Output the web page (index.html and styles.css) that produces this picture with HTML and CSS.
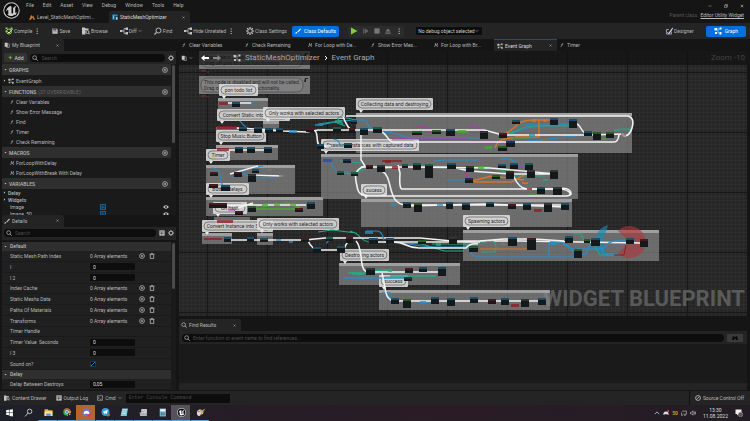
FILE: index.html
```html
<!DOCTYPE html>
<html lang="en">
<head>
  <meta charset="UTF-8">
  <meta name="viewport" content="width=device-width, initial-scale=1.0">
  <title>StaticMeshOptimizer</title>
  <link rel="stylesheet" href="styles.css">
</head>
<body>
  <!-- icon sprite -->
  <svg class="sprite" aria-hidden="true">
    <symbol id="i-gear" viewBox="0 0 16 16"><circle cx="8" cy="8" r="4.5" fill="none" stroke="currentColor" stroke-width="2"/><path d="M8 0v3M8 13v3M0 8h3M13 8h3M2.3 2.3l2.2 2.2M11.5 11.5l2.2 2.2M2.3 13.7l2.2-2.2M11.5 4.5l2.2-2.2" stroke="currentColor" stroke-width="2.4"/></symbol>
    <symbol id="i-search" viewBox="0 0 16 16"><circle cx="7" cy="7" r="5" fill="none" stroke="currentColor" stroke-width="1.8"/><path d="M11 11l4 4" stroke="currentColor" stroke-width="2.2"/></symbol>
    <symbol id="i-plus" viewBox="0 0 16 16"><circle cx="8" cy="8" r="6.5" fill="none" stroke="currentColor" stroke-width="1.8"/><path d="M8 4.5v7M4.5 8h7" stroke="currentColor" stroke-width="1.8"/></symbol>
    <symbol id="i-trash" viewBox="0 0 16 16"><path d="M1.500 3.500h13M6 3V1h4v2M3.500 4v11h9V4" fill="none" stroke="currentColor" stroke-width="2"/></symbol>
    <symbol id="i-graph" viewBox="0 0 16 16"><path d="M1 2h5v5H1zM11 1h4v4h-4zM2 10h4v4H2zM11 10h4v5h-4z" fill="currentColor"/><path d="M6 4h5M8 4v8h3" fill="none" stroke="currentColor"/></symbol>
    <symbol id="i-func" viewBox="0 0 16 16"><path d="M13 2c-3-1-4 0-5 4l-1 5c-.6 3-2 4-5 3M4 7h8" fill="none" stroke="currentColor" stroke-width="2"/></symbol>
    <symbol id="i-macro" viewBox="0 0 16 16"><path d="M1 14h3L6 2l3 9 5-9-2 12h3M4 2h3" fill="none" stroke="currentColor" stroke-width="2"/></symbol>
    <symbol id="i-down" viewBox="0 0 16 16"><path d="M3 5l5 5 5-5" fill="none" stroke="currentColor" stroke-width="2"/></symbol>
    <symbol id="i-tri" viewBox="0 0 16 16"><path d="M2 5h12l-6 7z" fill="currentColor"/></symbol>
    <symbol id="i-right" viewBox="0 0 16 16"><path d="M5 2v12l7-6z" fill="currentColor"/></symbol>
    <symbol id="i-dots" viewBox="0 0 16 16"><path d="M7 1h3v3H7zM7 7h3v3H7zM7 13h3v3H7z" fill="currentColor"/></symbol>
    <symbol id="i-close" viewBox="0 0 16 16"><path d="M3 3l10 10M13 3L3 13" stroke="currentColor" stroke-width="2.500"/></symbol>
    <symbol id="i-compile" viewBox="0 0 16 16"><path d="M1 1h4v3H1zM11 1h4v3h-4zM1 7h3v3H1z" fill="#8fd14a"/><circle cx="8" cy="9" r="5" fill="none" stroke="#9bd65a" stroke-width="2"/><path d="M5 9l3 3 7-8" fill="none" stroke="#dff5c4" stroke-width="2"/></symbol>
    <symbol id="i-save" viewBox="0 0 16 16"><path d="M1 1h11l3 3v11H1z" fill="currentColor"/><path d="M4 1h7v5H4zM4 10h8" fill="#555" stroke="#333"/></symbol>
    <symbol id="i-folder" viewBox="0 0 16 16"><path d="M0 1h6l1 2h6v3H7v9H0z" fill="currentColor"/><circle cx="11" cy="10" r="3" fill="none" stroke="currentColor" stroke-width="1.800"/><path d="M13 12l3 3" stroke="currentColor" stroke-width="2"/></symbol>
    <symbol id="i-diff" viewBox="0 0 16 16"><path d="M0 6h5v4H0zM11 1h5v5h-5zM11 10h5v5h-5z" fill="currentColor"/><path d="M5 8h3V3h3M8 8v5h3" fill="none" stroke="currentColor" stroke-width="1.500"/></symbol>
    <symbol id="i-pen" viewBox="0 0 16 16"><path d="M1 15c0-3 2-5 4-4s0 4-4 4zM6 10L14 1l2 2-8 9z" fill="currentColor"/></symbol>
    <symbol id="i-design" viewBox="0 0 16 16"><path d="M2 4h6v2H4v7h8V9h2v6H2z" fill="#8b9097"/><path d="M1 7l6 5 8-11 1 2-8 12z" fill="#cfe0ff"/></symbol>
    <symbol id="i-book" viewBox="0 0 16 16"><path d="M2 2h8v11H2z" fill="currentColor"/><path d="M11 5h3v10H6" fill="none" stroke="currentColor" stroke-width="1.500"/></symbol>
    <symbol id="i-arrow" viewBox="0 0 16 16"><path d="M0 8l7-6v4h9v4H7v4z" fill="currentColor"/></symbol>
    <symbol id="i-find" viewBox="0 0 16 16"><path d="M2 3h4v2h4V3h4l2 10h-6V9H6v4H0z" fill="currentColor"/></symbol>
    <symbol id="i-eye" viewBox="0 0 16 16"><path d="M0 8q8-9 16 0-8 9-16 0z" fill="currentColor"/><circle cx="8" cy="8" r="2.500" fill="#1a1a1a"/></symbol>
    <symbol id="i-image" viewBox="0 0 16 16"><path d="M1 1h14v14H1z" fill="#0d3550" stroke="#1f7fc0" stroke-width="2"/><path d="M4 12l3-6 3 4 2-2" stroke="#3aa0e0" fill="none"/></symbol>
    <symbol id="i-list" viewBox="0 0 16 16"><path d="M1 1h14v14H1z" fill="currentColor"/><path d="M3 5h10M3 9h10M7 5v9" stroke="#333" stroke-width="1.500"/></symbol>
    <symbol id="i-unreal" viewBox="0 0 32 32"><circle cx="16" cy="16" r="14.500" fill="#080808" stroke="currentColor" stroke-width="2"/><path d="M15 7c-6 2-9 6-9 11 1-2 2-3 3-3s1 1 1 2v5c0 1-1 1-2 1 4 4 8 4 11 3l2-2 2 1c2-2 3-4 3-6-1 1-2 2-3 1V11c1-2 2-3 3-4-3 0-5 2-6 4l-2-1c1 1 1 1 1 2v9c-1 1-3 1-3-1V10c0-1 0-2-1-3z" fill="currentColor"/></symbol>
  </svg>

  <header class="titlebar">
    <svg class="logo"><use href="#i-unreal"/></svg>
    <div class="titles">
      <nav class="menu">
        <a href="#">File</a><a href="#">Edit</a><a href="#">Asset</a><a href="#">View</a><a href="#">Debug</a><a href="#">Window</a><a href="#">Tools</a><a href="#">Help</a>
      </nav>
      <div class="asset-tabs">
        <button class="asset-tab"><svg class="icon" viewBox="0 0 16 16"><path d="M0 15L6 2l3 5 2-3 5 11h-4l-3-6-4 6z" fill="#d97a1c"/></svg>Level_StaticMeshOptimi...</button>
        <button class="asset-tab active"><svg class="icon" viewBox="0 0 16 16"><path d="M1 1h14v5H7v9H1z" fill="#1a8fc8"/><path d="M10 8h5v7h-5zM3 3h2v10H3z" fill="#7fd3ff"/></svg>StaticMeshOptimizer<svg class="icon tiny push"><use href="#i-close"/></svg></button>
      </div>
    </div>
    <div class="window-side">
      <div class="window-buttons">
        <button aria-label="Minimize"><svg class="icon small" viewBox="0 0 16 16"><path d="M2 8h12" stroke="#bbb" stroke-width="2"/></svg></button>
        <button aria-label="Restore"><svg class="icon small" viewBox="0 0 16 16"><path d="M2 5h9v9H2zM5 5V2h9v9h-3" fill="none" stroke="#bbb" stroke-width="2"/></svg></button>
        <button aria-label="Close"><svg class="icon small"><use href="#i-close"/></svg></button>
      </div>
      <p class="parent">Parent class: <a href="#">Editor Utility Widget</a></p>
    </div>
  </header>

  <div class="toolbar">
    <div class="tools">
      <button><svg class="icon big"><use href="#i-compile"/></svg>Compile</button>
      <button class="more" aria-label="Compile options"><svg class="icon"><use href="#i-dots"/></svg></button>
      <button><svg class="icon"><use href="#i-save"/></svg>Save</button>
      <button><svg class="icon big"><use href="#i-folder"/></svg>Browse</button>
      <button><svg class="icon big"><use href="#i-diff"/></svg>Diff<svg class="icon small"><use href="#i-down"/></svg></button>
      <button><svg class="icon big flip"><use href="#i-search"/></svg>Find</button>
      <button><svg class="icon big"><use href="#i-diff"/></svg>Hide Unrelated</button>
      <button class="more" aria-label="Hide options"><svg class="icon"><use href="#i-dots"/></svg></button>
      <button><svg class="icon big"><use href="#i-gear"/></svg>Class Settings</button>
    </div>
    <button class="primary"><svg class="icon"><use href="#i-pen"/></svg>Class Defaults</button>
    <div class="play-group">
      <button aria-label="Play"><svg class="icon big" viewBox="0 0 16 16"><path d="M2 1l13 7-13 7z" fill="#7ed038"/></svg></button>
      <button aria-label="Step"><svg class="icon" viewBox="0 0 16 16"><path d="M2 1v14M6 3l7 5-7 5z" stroke="#777" stroke-width="2" fill="#555"/></svg></button>
      <button aria-label="Stop"><svg class="icon" viewBox="0 0 16 16"><path d="M1 1h14v14H1z" fill="#777"/></svg></button>
      <button aria-label="Eject"><svg class="icon" viewBox="0 0 16 16"><path d="M8 1l7 8H1zM1 12h14v3H1z" fill="#777"/></svg></button>
      <button aria-label="Play options"><svg class="icon"><use href="#i-dots"/></svg></button>
    </div>
    <div class="debug">
      <select aria-label="Debug object"><option>No debug object selected</option></select>
      <svg class="icon small"><use href="#i-down"/></svg>
    </div>
    <div class="modes">
      <button><svg class="icon big"><use href="#i-design"/></svg>Designer</button>
      <button class="primary"><svg class="icon big"><use href="#i-graph"/></svg>Graph</button>
    </div>
  </div>

  <main>
    <aside>
      <section class="blueprint">
        <div class="panel-tab"><svg class="icon"><use href="#i-book"/></svg>My Blueprint<svg class="icon tiny push"><use href="#i-close"/></svg></div>
        <div class="search-row">
          <button class="add"><span>+</span>Add</button>
          <label class="search"><svg class="icon"><use href="#i-search"/></svg><input type="text" placeholder="Search" aria-label="Search blueprint"></label>
          <svg class="icon"><use href="#i-gear"/></svg>
        </div>
        <div class="scroll tall">
          <h2><svg class="icon tiny"><use href="#i-tri"/></svg>GRAPHS<svg class="icon push"><use href="#i-plus"/></svg></h2>
          <ul class="single">
            <li class="root"><svg class="icon tiny"><use href="#i-right"/></svg><svg class="icon"><use href="#i-graph"/></svg>EventGraph</li>
          </ul>
          <h2><svg class="icon tiny"><use href="#i-tri"/></svg>FUNCTIONS <small>(37 OVERRIDABLE)</small><svg class="icon push"><use href="#i-plus"/></svg></h2>
          <ul>
            <li><svg class="icon small"><use href="#i-func"/></svg>Clear Variables</li>
            <li><svg class="icon small"><use href="#i-func"/></svg>Show Error Message</li>
            <li><svg class="icon small"><use href="#i-func"/></svg>Find</li>
            <li><svg class="icon small"><use href="#i-func"/></svg>Timer</li>
            <li><svg class="icon small"><use href="#i-func"/></svg>Check Remaining</li>
          </ul>
          <h2><svg class="icon tiny"><use href="#i-tri"/></svg>MACROS<svg class="icon push"><use href="#i-plus"/></svg></h2>
          <ul>
            <li><svg class="icon small"><use href="#i-macro"/></svg>ForLoopWithDelay</li>
            <li><svg class="icon small"><use href="#i-macro"/></svg>ForLoopWithBreak With Delay</li>
          </ul>
          <h2><svg class="icon tiny"><use href="#i-tri"/></svg>VARIABLES<svg class="icon push"><use href="#i-plus"/></svg></h2>
          <ul class="vars">
            <li class="group"><svg class="icon tiny"><use href="#i-right"/></svg>Delay</li>
            <li class="group"><svg class="icon tiny"><use href="#i-right"/></svg>Widgets</li>
            <li class="var"><span>Image</span><svg class="icon"><use href="#i-image"/></svg><svg class="icon"><use href="#i-eye"/></svg></li>
            <li class="var"><span>Image_50</span><svg class="icon"><use href="#i-image"/></svg><svg class="icon"><use href="#i-eye"/></svg></li>
          </ul>
        </div>
      </section>

      <section class="details">
        <div class="panel-tab"><svg class="icon"><use href="#i-pen"/></svg>Details<svg class="icon tiny push"><use href="#i-close"/></svg></div>
        <div class="search-row">
          <label class="search"><svg class="icon"><use href="#i-search"/></svg><input type="text" placeholder="Search" aria-label="Search details"></label>
          <svg class="icon"><use href="#i-list"/></svg>
          <svg class="icon"><use href="#i-gear"/></svg>
        </div>
        <div class="scroll props">
          <h3><svg class="icon tiny"><use href="#i-tri"/></svg>Default</h3>
          <div class="prop"><span>Static Mesh Path Index</span><span class="value">0 Array elements</span><svg class="icon"><use href="#i-plus"/></svg><svg class="icon"><use href="#i-trash"/></svg></div>
          <div class="prop"><label for="i1">I</label><input id="i1" type="text" value="0"></div>
          <div class="prop"><label for="i2">I 2</label><input id="i2" type="text" value="0"></div>
          <div class="prop"><span>Index Cache</span><span class="value">0 Array elements</span><svg class="icon"><use href="#i-plus"/></svg><svg class="icon"><use href="#i-trash"/></svg></div>
          <div class="prop"><span>Static Meshs Data</span><span class="value">0 Array elements</span><svg class="icon"><use href="#i-plus"/></svg><svg class="icon"><use href="#i-trash"/></svg></div>
          <div class="prop"><span>Paths Of Materials</span><span class="value">0 Array elements</span><svg class="icon"><use href="#i-plus"/></svg><svg class="icon"><use href="#i-trash"/></svg></div>
          <div class="prop"><span>Transforms</span><span class="value">0 Array elements</span><svg class="icon"><use href="#i-plus"/></svg><svg class="icon"><use href="#i-trash"/></svg></div>
          <div class="prop"><span>Timer Handle</span></div>
          <div class="prop"><label for="tv">Timer Value &nbsp;Seconds</label><input id="tv" type="text" value="0"></div>
          <div class="prop"><label for="i3">I 3</label><input id="i3" type="text" value="0"></div>
          <div class="prop"><label for="sound">Sound on?</label><input id="sound" type="checkbox" checked></div>
          <h3><svg class="icon tiny"><use href="#i-tri"/></svg>Delay</h3>
          <div class="prop"><label for="dbd">Delay Between Destroys</label><input id="dbd" type="text" value="0,05"></div>
        </div>
      </section>
    </aside>

    <section class="work">
      <div class="doc-tabs">
        <button><svg class="icon small"><use href="#i-func"/></svg>Clear Variables</button>
        <button><svg class="icon small"><use href="#i-func"/></svg>Check Remaining</button>
        <button><svg class="icon small"><use href="#i-macro"/></svg>For Loop with De...</button>
        <button><svg class="icon small"><use href="#i-func"/></svg>Show Error Mes...</button>
        <button><svg class="icon small"><use href="#i-macro"/></svg>For Loop with Br...</button>
        <button class="active"><svg class="icon"><use href="#i-graph"/></svg>Event Graph<svg class="icon tiny push"><use href="#i-close"/></svg></button>
        <button><svg class="icon small"><use href="#i-func"/></svg>Timer</button>
      </div>

      <div class="canvas">
        <p class="watermark">WIDGET BLUEPRINT</p>
        <svg id="graph" viewBox="179 50 571 270" width="571" height="270"></svg>
        <div class="crumbs">
          <span class="bookmark"><svg class="icon"><use href="#i-book"/></svg><svg class="icon small"><use href="#i-down"/></svg></span>
          <svg class="icon big white"><use href="#i-arrow"/></svg>
          <svg class="icon big flip dim"><use href="#i-arrow"/></svg>
          <svg class="icon big gap"><use href="#i-graph"/></svg>
          <span>StaticMeshOptimizer</span>
          <svg class="icon small white" viewBox="0 0 16 16"><path d="M4 0l8 8-8 8" fill="none" stroke="currentColor" stroke-width="4"/></svg>
          <span>Event Graph</span>
          <span class="zoom">Zoom -10</span>
        </div>
      </div>

      <div class="find">
        <div class="panel-tab"><svg class="icon"><use href="#i-search"/></svg>Find Results<svg class="icon tiny push"><use href="#i-close"/></svg></div>
        <div class="find-row">
          <label class="search"><svg class="icon"><use href="#i-search"/></svg><input type="text" placeholder="Enter function or event name to find references..." aria-label="Find references"></label>
          <button aria-label="Find in all blueprints"><svg class="icon"><use href="#i-find"/></svg></button>
        </div>
        <div class="results"></div>
      </div>
    </section>
  </main>

  <footer class="status">
    <button><svg class="icon"><use href="#i-folder"/></svg>Content Drawer</button>
    <button><svg class="icon"><use href="#i-list"/></svg>Output Log</button>
    <button><svg class="icon" viewBox="0 0 16 16"><path d="M1 2h14v12H1zM3 5l3 3-3 3M8 11h4" fill="none" stroke="#ccc" stroke-width="1.500"/></svg>Cmd<svg class="icon small"><use href="#i-down"/></svg></button>
    <input type="text" placeholder="Enter Console Command" aria-label="Console command">
    <button class="source"><svg class="icon" viewBox="0 0 16 16"><circle cx="8" cy="8" r="6.500" fill="none" stroke="#ccc" stroke-width="2"/><path d="M4 12l8-8" stroke="#ccc" stroke-width="2"/></svg>Source Control Off</button>
  </footer>

  <div class="taskbar">
    <button aria-label="Start"><svg viewBox="0 0 16 16"><path d="M2 4l5-1v5H2zM8 3l6-1v6H8zM2 9h5v4l-5-1zM8 9h6v6l-6-1z" fill="#fff"/></svg></button>
    <button aria-label="Search"><svg class="flip" viewBox="0 0 16 16"><circle cx="6" cy="6" r="4" fill="none" stroke="#ddd" stroke-width="1.500"/><path d="M9 9l5 6" stroke="#ddd" stroke-width="1.500"/></svg></button>
    <button class="open" aria-label="Explorer"><svg viewBox="0 0 16 16"><path d="M1 2h6l1 2h7v10H1z" fill="#e9b53c"/><path d="M1 6h14v8H1z" fill="#ffe08a"/><path d="M4 10h8v4H4z" fill="#3a9be0"/></svg></button>
    <button class="open" aria-label="Chrome"><svg viewBox="0 0 16 16"><circle cx="7" cy="7" r="6.500" fill="#3aa757"/><path d="M1 4a7 7 0 0 1 12.500 1H7z" fill="#e8453c"/><path d="M13.500 5A7 7 0 0 1 7 14l3-6z" fill="#fbc116"/><circle cx="7" cy="7" r="2.800" fill="#4688f1" stroke="#fff"/><circle cx="12" cy="12" r="3.500" fill="#222"/><circle cx="12" cy="11" r="1.300" fill="#eee"/></svg></button>
    <button class="open alert" aria-label="Discord"><svg viewBox="0 0 16 16"><circle cx="8" cy="8" r="7" fill="#6b74dc"/><path d="M3 11c0-5 2-6 5-6s5 1 5 6l-3-1H6z" fill="#fff"/><circle cx="13" cy="13" r="3" fill="#e33a4a"/></svg></button>
    <button class="open" aria-label="Telegram"><svg viewBox="0 0 16 16"><circle cx="8" cy="7" r="7" fill="#2c9fdc"/><path d="M3 7l9-4-2 8-2-2-2 2-1-3z" fill="#fff"/><circle cx="13" cy="12" r="3" fill="#777"/></svg></button>
    <button class="open" aria-label="Notepad"><svg viewBox="0 0 16 16"><path d="M4 1h10l-2 13H1z" fill="#7fc6d6"/><path d="M4 3h9M3 7h8M3 10h7" stroke="#e8f8fb"/></svg></button>
    <button class="open" aria-label="Viewer"><svg viewBox="0 0 16 16"><path d="M4 2h10v8H4z" fill="#ddd"/><path d="M1 7l6 3 7-4v8H2z" fill="#aeb4ba"/><path d="M5 5l3 2 3-3" stroke="#555" fill="none"/></svg></button>
    <button class="open" aria-label="Calculator"><svg viewBox="0 0 16 16"><path d="M3 1h11v14H3z" fill="#7eb9cc"/><path d="M4 2h9v4H4z" fill="#e8f4f8"/><path d="M5 9h7M5 12h7" stroke="#31566b" stroke-width="2" stroke-dasharray="2 1"/></svg></button>
    <button class="open current" aria-label="Unreal Editor"><svg><use href="#i-unreal"/></svg></button>
    <button class="open" aria-label="Paint"><svg viewBox="0 0 16 16"><path d="M2 6c2-5 11-4 11 1s-3 4-4 4-1 4-4 3-4-4-3-8z" fill="#d7dde2"/><circle cx="5" cy="6" r="1.500" fill="#e44"/><circle cx="9" cy="5" r="1.500" fill="#4a4"/><path d="M8 12L15 2" stroke="#d98e3a" stroke-width="2"/></svg></button>
    <div class="tray">
      <svg class="icon" viewBox="0 0 16 16"><path d="M2 11l6-6 6 6" fill="none" stroke="#ddd" stroke-width="2"/></svg>
      <svg class="icon" viewBox="0 0 16 16"><path d="M1 13c0-7 2-9 7-9s7 2 7 9l-4-2H5z" fill="#ddd"/><circle cx="14" cy="3" r="3" fill="#e33"/></svg>
      <span class="temp">50</span>
      <svg class="icon" viewBox="0 0 16 16"><path d="M3 3h12v8H6M1 6v8h4M8 14h5" fill="none" stroke="#ddd" stroke-width="1.500"/></svg>
      <svg class="icon" viewBox="0 0 16 16"><path d="M1 6h3l4-4v12l-4-4H1zM11 5q2 3 0 6M13 3q4 5 0 10" fill="none" stroke="#ddd" stroke-width="1.500"/></svg>
      <p class="clock">13:30<br>11.08.2022</p>
      <svg class="icon big" viewBox="0 0 16 16"><path d="M1 1h12v9H7l-3 3v-3H1z" fill="#eee"/><circle cx="11" cy="11" r="4.500" fill="#555" stroke="#aaa"/></svg>
    </div>
  </div>

  <script src="graph.js"></script>
</body>
</html>
```

FILE: styles.css
```css
:root{
  --bg:#151515;
  --panel:#1a1a1a;
  --bar:#242424;
  --head:#2f2f2f;
  --field:#0d0d0d;
  --text:#b8b8b8;
  --blue:#0070e0;
}
*{
  padding:0;
  margin:0;
  box-sizing:border-box;
}
body{
  display:flex;
  flex-direction:column;
  height:100vh;
  overflow:hidden;
  background:var(--bg);
  color:var(--text);
  font-family:Roboto,"Liberation Sans",sans-serif;
  font-size:5px;
  line-height:6px;
}
button,input,select{
  font:inherit;
  color:inherit;
  background:none;
  border:0;
  outline:none;
}
button{
  display:flex;
  align-items:center;
  gap:2px;
  white-space:nowrap;
}
a{
  color:inherit;
}
ul{
  list-style:none;
}
input::placeholder{
  color:#4c4c4c;
}
.sprite{
  display:none;
}
.icon{
  width:6px;
  height:6px;
  flex:none;
  color:#c4c4c4;
}
.icon.tiny{
  width:3px;
  height:3px;
}
.icon.small{
  width:4px;
  height:4px;
}
.icon.big{
  width:8px;
  height:8px;
}
.icon.white{
  color:#fff;
}
.icon.dim{
  color:#888;
}
.flip{
  transform:scaleX(-1);
}
.push{
  margin-left:auto;
}

/* title bar */
.titlebar{
  display:flex;
  height:23px;
  flex:none;
}
.logo{
  width:17px;
  height:17px;
  margin:2px 0 0 3px;
  color:#ccc;
}
.titles{
  display:flex;
  flex-direction:column;
  justify-content:space-between;
}
.menu{
  display:flex;
  gap:9px;
  padding:2px 0 0 6px;
}
.menu a{
  text-decoration:none;
}
.asset-tabs{
  display:flex;
}
.asset-tab{
  width:89px;
  height:12px;
  padding:0 9px;
}
.asset-tab.active{
  width:81px;
  padding:0 5px 0 3px;
  background:var(--bar);
  color:#ddd;
  border-radius:2px 2px 0 0;
}
.window-side{
  display:flex;
  flex-direction:column;
  align-items:flex-end;
  gap:4px;
  margin-left:auto;
  padding:4px 6px 0 0;
}
.window-buttons{
  display:flex;
  gap:12px;
}
.parent{
  color:#555;
}
.parent a{
  color:#bbb;
  margin-left:1px;
}

/* toolbar */
.toolbar{
  display:flex;
  align-items:center;
  height:16px;
  flex:none;
  padding:0 4px 0 5px;
  background:var(--bar);
}
.toolbar button{
  gap:1px;
}
.tools{
  display:flex;
  gap:12px;
}
.tools .more{
  margin-left:-10px;
}
.primary{
  height:11px;
  padding:0 3px;
  background:var(--blue);
  color:#fff;
  border-radius:2px;
}
.primary .icon{
  color:#fff;
}
.tools + .primary{
  margin-left:5px;
}
.toolbar .primary{
  gap:3px;
}
.play-group{
  display:flex;
  align-items:center;
  gap:5px;
  height:11px;
  margin-left:9px;
  padding:0 2px;
  background:#2c2c2c;
  border-radius:2px;
}
.debug{
  display:flex;
  align-items:center;
  height:8px;
  margin-left:12px;
  padding:0 3px 0 2px;
  background:var(--field);
  border-radius:1px;
}
.debug select{
  appearance:none;
  color:#ccc;
}
.modes{
  display:flex;
  align-items:center;
  gap:12px;
  margin-left:auto;
}
.modes .primary{
  padding:0 8px;
}

main{
  display:flex;
  flex:1;
  min-height:0;
}
aside{
  display:flex;
  flex-direction:column;
  width:177px;
  flex:none;
  padding:0 1px 0 2px;
}
.panel-tab{
  display:flex;
  align-items:center;
  gap:2px;
  width:62px;
  height:12px;
  flex:none;
  padding:0 5px 0 2px;
  background:var(--bar);
  border-radius:2px 2px 0 0;
}
.search-row{
  display:flex;
  align-items:center;
  gap:3px;
  height:13px;
  flex:none;
  padding:0 2px;
  background:var(--bar);
}
.add{
  height:9px;
  padding:0 4px;
  background:#333;
  border-radius:2px;
  color:#ddd;
}
.add span{
  color:#7ed038;
  font-size:8px;
}
.search{
  display:flex;
  align-items:center;
  flex:1;
  gap:3px;
  height:8px;
  padding:0 2px;
  background:var(--field);
  border-radius:4px;
}
.search input{
  flex:1;
  min-width:0;
}

/* scrolling lists, the thumb is drawn on the right edge */
.scroll{
  position:relative;
  flex:1;
  min-height:0;
  overflow:hidden;
  padding-right:5px;
  background:var(--panel);
}
.scroll::after{
  content:"";
  position:absolute;
  top:1px;
  right:1px;
  width:3px;
  height:46px;
  background:#4a4a4a;
  border-radius:2px;
}
.scroll.tall::after{
  height:78px;
}
.blueprint{
  display:flex;
  flex-direction:column;
  height:50%;
}
.blueprint h2{
  display:flex;
  align-items:center;
  gap:2px;
  height:11px;
  padding:0 3px 0 2px;
  background:var(--head);
  font-size:5px;
  font-weight:500;
}
.blueprint h2 small{
  color:#666;
  font-size:5px;
  font-weight:400;
}
.blueprint li{
  display:flex;
  align-items:center;
  gap:2px;
  height:10px;
  padding-left:8px;
}
.blueprint .root{
  height:11px;
  padding-left:1px;
}
.blueprint .vars li{
  height:7px;
}
.blueprint .vars .group{
  padding-left:1px;
  font-weight:500;
}
.blueprint .vars .var{
  display:grid;
  grid-template-columns:88px 1fr 6px;
  padding-right:2px;
}
.details{
  display:flex;
  flex-direction:column;
  flex:1;
  min-height:0;
}
.props{
  display:flex;
  flex-direction:column;
  margin-top:2px;
}
.props h3{
  display:flex;
  align-items:center;
  gap:3px;
  flex:1;
  padding-left:2px;
  background:var(--head);
  font-size:5px;
  font-weight:500;
}
.prop{
  display:grid;
  grid-template-columns:76px 45px 6px 6px;
  gap:4px;
  align-items:center;
  flex:1;
  padding-left:8px;
  background:#202020;
  border-bottom:1px solid #1a1a1a;
  white-space:nowrap;
}
.prop input[type=text]{
  height:7px;
  padding:0 3px;
  background:var(--field);
  border-radius:1px;
  color:#ddd;
}
.prop input[type=checkbox]{
  appearance:none;
  width:6px;
  height:6px;
  background:#0a0a0a;
  border:1px solid #333;
}
.prop input[type=checkbox]:checked{
  background:linear-gradient(135deg,#0a0a0a 40%,#2d8ee8 41% 59%,#0a0a0a 60%);
}

/* graph side */
.work{
  display:flex;
  flex-direction:column;
  flex:1;
  min-width:0;
  padding:0 3px 0 2px;
}
.doc-tabs{
  display:flex;
  height:12px;
  flex:none;
}
.doc-tabs button{
  width:63px;
  gap:3px;
  padding:0 5px 0 3px;
}
.doc-tabs .active{
  gap:2px;
  background:var(--bar);
  color:#ddd;
  border-top:1px solid #1b4f86;
}
.canvas{
  position:relative;
  flex:1;
  min-height:0;
  overflow:hidden;
  background-color:#262626;
  background-image:
    linear-gradient(#181818 1px,transparent 1px),
    linear-gradient(90deg,#181818 1px,transparent 1px),
    linear-gradient(#2d2d2d 1px,transparent 1px),
    linear-gradient(90deg,#2d2d2d 1px,transparent 1px);
  background-size:60px 60px,60px 60px,4px 4px,4px 4px;
  background-position:28px 21px;
}
.canvas > svg{
  position:relative;
  display:block;
}
.crumbs{
  position:absolute;
  top:0;
  left:0;
  right:0;
  display:flex;
  align-items:center;
  gap:4px;
  height:14px;
  padding-right:2px;
  background:rgba(14,14,14,0.65);
  color:#aaa;
  font-size:8px;
  line-height:10px;
}
.bookmark{
  display:flex;
  align-items:center;
  gap:2px;
  width:18px;
  padding-left:2px;
}
.crumbs .gap{
  margin-left:8px;
}
.zoom{
  margin-left:auto;
  color:#444;
}
.watermark{
  position:absolute;
  right:2px;
  bottom:4px;
  color:#5a5a5a;
  font-size:22px;
  font-weight:700;
  line-height:26px;
}
.bubble-text{
  font-size:5px;
  fill:#2a2a2a;
}
.find{
  padding-top:3px;
}
.find-row{
  display:flex;
  align-items:center;
  gap:3px;
  height:13px;
  padding:0 4px 0 3px;
  background:var(--bar);
}
.find-row button{
  justify-content:center;
  width:16px;
  height:8px;
  background:#3a3a3a;
}
.find-row button .icon{
  color:#080808;
}
.results{
  height:46px;
  background:var(--panel);
  border-bottom:7px solid var(--bar);
}

/* status bar */
.status{
  display:flex;
  align-items:center;
  gap:9px;
  height:14px;
  flex:none;
  margin-top:1px;
  padding:0 3px 0 4px;
  background:var(--bar);
}
.status > input{
  width:104px;
  height:9px;
  margin-left:-5px;
  padding:0 3px;
  background:var(--field);
  font-family:"Liberation Mono",monospace;
}
.source{
  height:100%;
  margin-left:auto;
  padding:0 3px 0 5px;
  border-left:1px solid #111;
}

/* windows taskbar */
.taskbar{
  display:flex;
  height:16px;
  flex:none;
  background:linear-gradient(90deg,#1e2029,#261d25 35%,#2a1c25 60%,#221d24);
}
.taskbar button{
  justify-content:center;
  width:19px;
  border-bottom:1px solid transparent;
}
.taskbar button svg{
  width:9px;
  height:9px;
  color:#fff;
}
.taskbar .open{
  border-bottom-color:#5fa4dc;
  border-left:1px solid transparent;
}
.taskbar .alert{
  background:#b5652c;
}
.taskbar .current{
  background:#55525a;
}
.tray{
  display:flex;
  align-items:center;
  gap:3px;
  margin-left:auto;
  padding-right:7px;
}
.temp{
  color:#c8992c;
  font-weight:700;
}
.clock{
  margin:0 4px;
  color:#ddd;
  text-align:center;
}
```

FILE: graph.js
```js
const NS = 'http://www.w3.org/2000/svg';
const graph = document.querySelector('#graph');

function add(tag, attrs, text) {
  const el = document.createElementNS(NS, tag);
  for (const key in attrs) el.setAttribute(key, attrs[key]);
  if (text) el.textContent = text;
  graph.appendChild(el);
  return el;
}

// comment boxes: x, y, width, height
const boxes = [
  [218, 97, 50, 11], [263, 120, 16, 11], [216, 126, 24, 4], [216, 144, 62, 15],
  [206, 164, 89, 29], [206, 196, 117, 19], [214, 216, 36, 6], [202, 232, 30, 11], [257, 232, 16, 12],
  [356, 112, 276, 40], [321, 153, 257, 45], [361, 198, 211, 28],
  [463, 229, 196, 31], [339, 262, 121, 22], [379, 289, 171, 20]
];

// comment bubbles: x, y, width, text
const bubbles = [
  [219, 83, 39, 'pon todo list'],
  [217, 108, 73, 'Convert Static into Instance'],
  [263, 106, 82, 'Only works with selected actors'],
  [356, 97, 77, 'Collecting data and destroying'],
  [216, 129, 50, 'Stop Music Button'],
  [206, 148, 24, 'Timer'],
  [206, 182, 43, 'Button delays'],
  [213, 201, 34, 'On hash'],
  [202, 219, 71, 'Convert Instance into Static'],
  [257, 217, 82, 'Only works with selected actors'],
  [321, 138, 98, 'Spawning instances with captured data'],
  [361, 183, 26, 'sucess'],
  [463, 214, 47, 'Spawning actors'],
  [340, 248, 49, 'Destroying actors'],
  [379, 274, 29, 'success']
];

const white = '#f2f2f2', blue = '#2b8cc4', teal = '#25a884', pink = '#c22bb8', orange = '#d4762a', green = '#48a82c', red = '#8c1c22';

// wires: colour, path, width
const wires = [
  // collecting data
  [blue, 'M240 120q6 8 12 8M318 123q25-4 45-4c6 0 3 8 10 9', 1.2],
  [blue, 'M383 131c20 0 16 6 28 6H484M500 141c50 0 65-7 88-7M503 134c20-2 12-11 72-10', 1.2],
  [blue, 'M505 132c16-8 12-9 45-9h22M333 138q6 0 8 8', 1.2],
  [teal, 'M320 124l15-3 10 4M343 123q-12-9 4-6l9 2M503 133c18-1 14-8 32-8h38M620 128h9v4', 1.2],
  [pink, 'M417 126h9l4 5h4M467 126h11l6 6M392 138h75M466 141h28M484 142h22', 1.2],
  [orange, 'M498 134c18-1 14-15 35-15h20M539 119v17h-24M495 147q2-10 18-10', 1.4],
  [green, 'M457 131h12M511 137h20M597 138h9', 1.2],
  [white, 'M236 127L258 128 283 130 307 131 318 129 352 129 377 129H484L503 134H588L624 133', 1.5],
  [white, 'M315 130c4 2 0 15 6 15h10', 1.5],
  [white, 'M343 116c4 8 4 10 8 13M346 115H628q7 2 4 12t-10 7', 1.6],
  [white, 'M379 130c8 1 8 10 14 11H614q4 0 5-7', 1.6],
  [white, 'M361 132v27l4 6M574 122c8 0 6 11 14 11', 1.5],
  // spawning instances
  [blue, 'M331 160q2 10 8 11h10M434 161q2-2 14-2h30M447 179h24M500 158q14-2 18 7h10', 1.2],
  [pink, 'M345 161h16M466 167c-2 8 2 6 2 13M515 165h8', 1.2],
  [teal, 'M337 171l14 2 24-8M480 168h20l10 7h35M340 160l22 2', 1.2],
  [orange, 'M472 180l20-5 32 4M474 181h38l12-7', 1.4],
  [green, 'M470 166h20M500 169h14M528 194h12', 1.2],
  [red, 'M382 160h20M388 166h11', 1.5],
  [white, 'M361 166h49l80 1 66 6M377 167L400 166H451L470 170 510 173H557', 1.4],
  [white, 'M365 165c-12 4-10 12-8 20 1 8 4 9 12 10H567q6-1 3-5t-15-2H402q-3 0-2-16l-2-8', 1.6],
  [white, 'M382 170c12 6 4 34 25 34H567M513 174q6 14 14 14h32q10 0 12 6', 1.5],
  // small groups on the left
  [blue, 'M212 167q10 2 8 12l4 8M245 103q6-3 12-1M233 177q8-10 30-12M240 168q4 12 36 8', 1.2],
  [green, 'M252 208h48M256 205l10-2h12l10-1 12 5', 1.5],
  [pink, 'M228 209h6l4 4', 1],
  [teal, 'M318 231l14-2 24 3q8 10 18 10M350 230q7 2 10 6', 1.2],
  [white, 'M228 102h24M228 149h40M230 173l28-8M250 174l32 1', 1.4],
  [white, 'M224 204h82M238 207l15-5M224 239H305l20-2H420L452 240H520l120 2', 1.5],
  // lower rows
  [blue, 'M366 230h11q5 0 7 9M396 241c20 2 16 5 44 5h26c4 0 4 10 12 10h98M326 242q2 0 4-6', 1.2],
  [blue, 'M550 241h10q8 1 14 12h12q4-14 12-12l6 12h14M549 256v-14h8M563 242q8 8 14 6h26q6-8 12-8h20', 1.3],
  [teal, 'M384 241l38 2 22 7h20M432 243h48M475 241h10q14-4 10 10h-14M573 233h8l3 7h8l8 14h14', 1.2],
  [orange, 'M480 248h48', 1.2],
  [red, 'M614 254h10l2-10', 1],
  [teal, 'M348 272h62M358 274l22-5h12M390 275h44', 1.3],
  [blue, 'M344 277h66M386 294l5 6M382 292h8v6M418 301h12', 1.3],
  [white, 'M308 240q4 8 10 9h22M344 248q4-10 8-10M356 240c8 8 2 30 12 31h74', 1.6],
  [white, 'M393 241c14 0 12 6 26 6H466q4-5 12-4M382 272l4 20q2 7 8 8H545', 1.5],
  [white, 'M378 241H480M480 240l24-2h30l30 2M407 205l78-2 80 3', 1.4]
];

// nodes: x, y, width, height, title colour
const nodes = [
  [219, 101, 9, 3, red], [232, 101, 8, 5, blue], [251, 101, 8, 2, '#53707e'],
  [217, 125, 20, 3, red], [239, 126, 8, 4, blue], [254, 126, 8, 6, blue], [265, 127, 8, 5, blue], [276, 127, 7, 4, blue], [289, 129, 8, 3, blue], [306, 127, 8, 4, red], [333, 126, 8, 5, teal], [315, 123, 8, 2, blue], [349, 127, 6, 5, red], [360, 127, 8, 7, blue], [373, 126, 9, 6, teal], [335, 119, 7, 3, teal], [351, 119, 6, 4, blue],
  [412, 130, 10, 4, green], [432, 129, 9, 4, green], [446, 128, 9, 7, blue], [458, 129, 8, 3, green], [480, 130, 8, 8, '#555'], [499, 132, 8, 5, red], [485, 145, 7, 3, green], [498, 145, 9, 5, green], [506, 140, 9, 6, '#2a4ba5'],
  [512, 119, 8, 4, blue], [529, 133, 6, 3, blue], [532, 118, 4, 3, orange], [543, 118, 4, 3, orange], [550, 117, 8, 7, blue], [569, 118, 8, 9, blue], [584, 130, 8, 5, blue], [593, 131, 8, 8, green], [606, 131, 8, 6, green], [614, 128, 6, 2, teal], [621, 132, 5, 3, '#777'],
  [217, 147, 12, 3, red], [235, 146, 8, 6, blue], [247, 146, 8, 6, blue], [264, 146, 8, 6, blue], [317, 143, 7, 5, blue], [344, 142, 8, 5, blue],
  [323, 158, 9, 3, '#2a4ba5'], [343, 158, 8, 4, '#2a4ba5'], [337, 170, 7, 4, teal], [351, 171, 7, 4, teal], [366, 164, 7, 4, red], [377, 164, 8, 7, '#555'], [385, 159, 6, 3, red], [392, 165, 6, 3, red], [402, 163, 6, 4, teal], [413, 162, 8, 7, teal], [425, 163, 8, 14, teal], [447, 162, 9, 6, blue], [466, 165, 8, 6, '#555'], [478, 165, 6, 3, green], [465, 177, 8, 5, '#2a4ba5'], [498, 163, 8, 4, blue], [510, 162, 8, 6, blue], [525, 162, 8, 7, teal], [506, 170, 8, 8, red], [527, 169, 8, 8, '#555'], [550, 169, 8, 9, '#555'], [492, 174, 8, 4, green], [522, 181, 6, 2, orange], [543, 178, 5, 2, teal], [537, 186, 8, 7, blue], [553, 186, 9, 8, '#555'], [527, 187, 5, 2, red],
  [210, 171, 8, 4, red], [234, 171, 8, 5, red], [248, 173, 8, 8, '#555'], [252, 168, 7, 4, blue], [267, 168, 5, 2, '#777'], [279, 174, 6, 2, '#777'], [209, 183, 9, 4, red], [221, 184, 9, 6, blue],
  [209, 202, 18, 5, red], [235, 210, 8, 4, red], [248, 205, 8, 6, green], [262, 203, 6, 3, green], [274, 202, 6, 3, green], [290, 202, 6, 3, green], [295, 207, 8, 4, red], [307, 201, 8, 7, blue], [217, 219, 16, 3, red],
  [391, 202, 6, 3, blue], [403, 201, 8, 6, blue], [414, 202, 8, 9, green], [437, 203, 6, 2, blue], [446, 201, 7, 7, blue], [462, 202, 8, 7, blue], [486, 201, 8, 5, blue], [508, 203, 8, 5, red], [523, 202, 8, 7, blue], [534, 208, 8, 3, red], [544, 202, 8, 9, '#555'], [561, 202, 8, 7, blue],
  [204, 237, 18, 2, red], [224, 236, 7, 5, blue], [247, 236, 7, 5, blue], [260, 237, 8, 4, blue], [276, 238, 5, 2, blue], [289, 240, 4, 2, blue], [301, 237, 8, 4, red], [313, 246, 8, 6, blue], [326, 236, 7, 4, teal], [337, 245, 8, 7, blue], [346, 236, 7, 6, red], [369, 237, 9, 6, blue], [386, 237, 8, 5, blue], [365, 230, 8, 3, blue], [418, 239, 8, 4, green], [449, 236, 8, 7, '#555'], [469, 245, 9, 6, green], [436, 242, 5, 3, teal], [501, 242, 5, 2, '#777'],
  [508, 236, 9, 9, blue], [527, 237, 9, 12, red], [565, 235, 8, 7, blue], [550, 241, 7, 3, blue], [574, 248, 8, 9, green], [584, 238, 6, 4, green], [591, 237, 9, 8, blue], [607, 252, 7, 3, blue], [626, 237, 8, 6, blue], [640, 238, 8, 8, red],
  [352, 271, 8, 3, teal], [366, 267, 9, 7, '#555'], [388, 268, 4, 3, teal], [405, 267, 8, 5, red], [419, 266, 8, 5, blue], [438, 266, 8, 9, blue], [404, 276, 8, 4, '#456'], [431, 274, 5, 2, teal],
  [391, 297, 8, 6, blue], [403, 298, 8, 9, green], [420, 300, 6, 3, blue], [431, 296, 8, 7, blue], [447, 297, 8, 8, blue], [470, 296, 8, 6, blue], [488, 298, 8, 5, red], [501, 297, 8, 7, blue], [511, 303, 8, 3, red], [521, 298, 8, 8, '#555'], [538, 297, 8, 7, blue]
];

// disabled event notes
for (const y of [50, 75]) {
  add('rect', { x: 199, y: y, width: 111, height: 18, fill: '#777' });
  add('rect', { x: 201, y: y + 2, width: 102, height: 14, rx: 6, fill: '#808080', stroke: '#333', 'stroke-width': 0.5 });
  add('text', { x: 204, y: y + 8, class: 'bubble-text' }, 'This node is disabled and will not be called.');
  add('text', { x: 204, y: y + 14, class: 'bubble-text' }, 'Drag off pins to build functionality.');
  add('path', { d: `M304 ${y + 6}h2v-3h2v-1h-3z`, fill: '#222' });
  add('path', { d: `M201 ${y + 20}h5M207 ${y + 21}h2`, stroke: '#733', 'stroke-width': 1 });
}

for (const [x, y, w, h] of boxes) {
  add('rect', { x: x, y: y, width: w, height: h, fill: '#8c8c8c', opacity: 0.68 });
  if (h > 6) add('rect', { x: x, y: y, width: w, height: 3, fill: '#a8a8a8', opacity: 0.85 });
}

// faded crest behind the spawning row
add('path', { d: 'M608 224a17 17 0 0 0 0 33l-5-16z', fill: '#168bb4', opacity: 0.65 });
add('path', { d: 'M618 230a16 16 0 1 1 0 22l12-11z', fill: '#b2343a', opacity: 0.6 });

for (const [x, y, w, text] of bubbles) {
  add('rect', { x: x, y: y, width: w, height: 12, rx: 1, fill: '#dcdcdc', opacity: 0.9 });
  add('path', { d: `M${x + 3} ${y + 12}h4l-2 3z`, fill: '#eee' });
  add('rect', { x: x + 2, y: y + 2, width: w - 4, height: 8, rx: 4, fill: 'none', stroke: '#4a4a4a', 'stroke-width': 0.6 });
  add('text', { x: x + w / 2, y: y + 8, 'text-anchor': 'middle', class: 'bubble-text' }, text);
}

for (const [color, d, width] of wires) {
  add('path', { d: d, fill: 'none', stroke: color, 'stroke-width': width });
}

for (const [x, y, w, h, color] of nodes) {
  if (h < 4) {
    add('rect', { x: x, y: y, width: w, height: h, fill: color, opacity: 0.75 });
    continue;
  }
  add('rect', { x: x, y: y, width: w, height: h, fill: '#141a1c' });
  add('rect', { x: x, y: y, width: w, height: 2, fill: color, opacity: 0.45 });
}
```
